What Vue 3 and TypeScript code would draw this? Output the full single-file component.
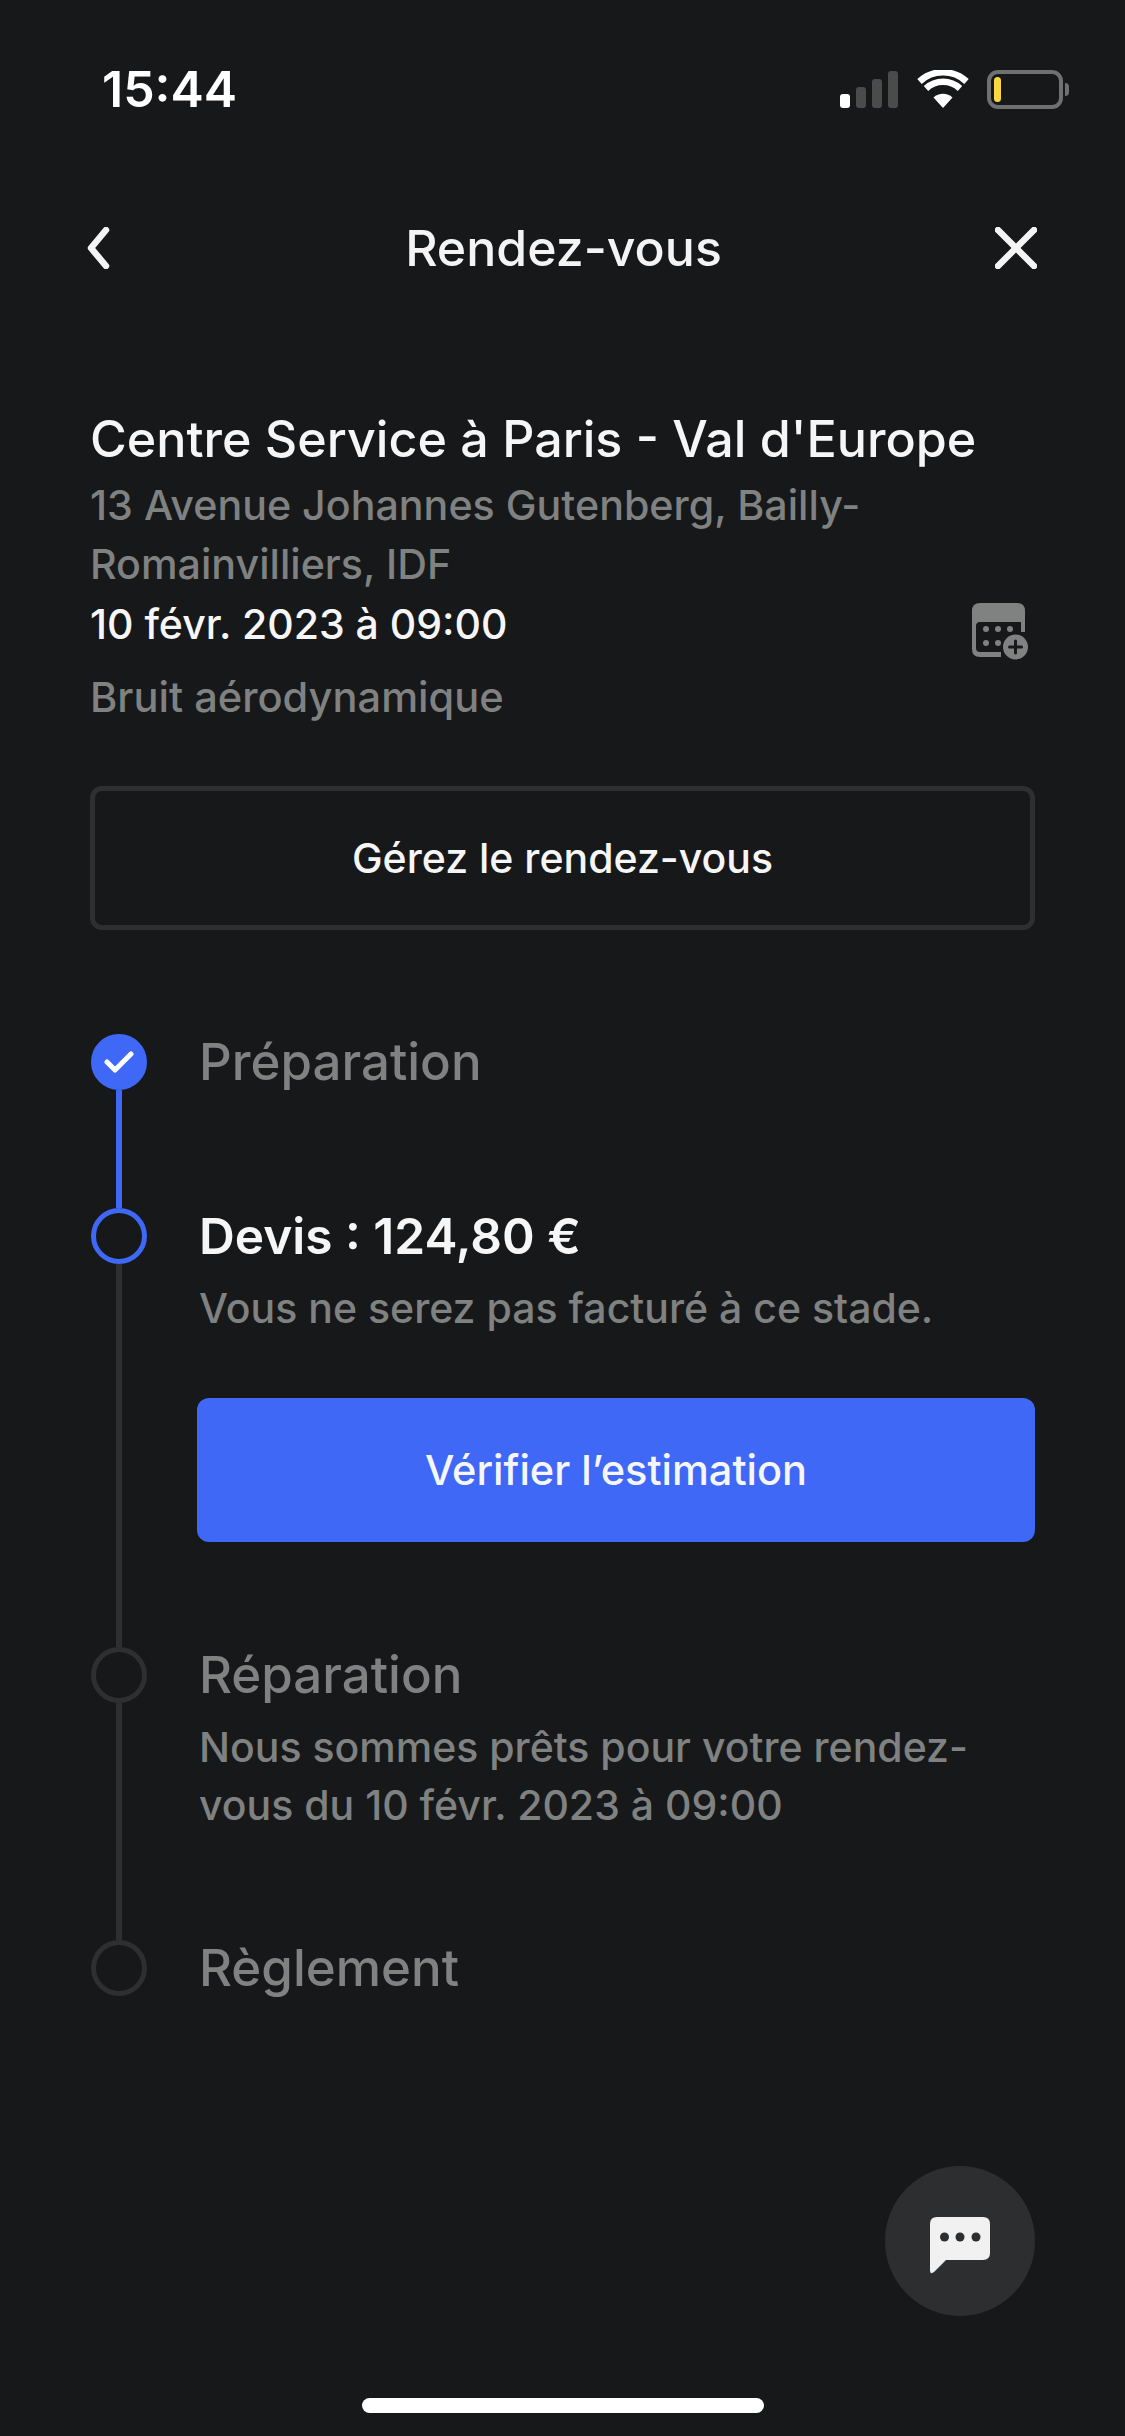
<script setup lang="ts">
interface Step {
  title: string
  state: 'done' | 'active' | 'todo'
  text?: string
  action?: string
}
const steps: Step[] = [
  { title: 'Préparation', state: 'done' },
  { title: 'Devis : 124,80 €', state: 'active', text: 'Vous ne serez pas facturé à ce stade.', action: 'Vérifier l’estimation' },
  { title: 'Réparation', state: 'todo', text: 'Nous sommes prêts pour votre rendez-vous du 10 févr. 2023 à 09:00' },
  { title: 'Règlement', state: 'todo' }
]
</script>

<template>
  <div class="screen">
    <div class="status">
      <span class="time">15:44</span>
      <div class="status-icons">
        <div class="signal">
          <i class="b1"></i><i class="b2"></i><i class="b3"></i><i class="b4"></i>
        </div>
        <svg class="wifi" width="52" height="38" viewBox="0 0 52 38">
          <path d="M26 38 L16.5 27.5 A14 14 0 0 1 35.5 27.5 Z" fill="#fff" />
          <path d="M9 18.5 A25 25 0 0 1 43 18.5" fill="none" stroke="#fff" stroke-width="6.5" />
          <path d="M2.5 11.5 A34.5 34.5 0 0 1 49.5 11.5" fill="none" stroke="#fff" stroke-width="6.5" />
        </svg>
        <div class="battery"><span class="level"></span></div>
        <span class="nub"></span>
      </div>
    </div>

    <header class="nav">
      <svg width="24" height="42" viewBox="0 0 24 42">
        <path d="M20 3 L5 21 L20 39" fill="none" stroke="#f4f4f4" stroke-width="6.5" stroke-linecap="round" stroke-linejoin="round" />
      </svg>
      <h1 class="nav-title">Rendez-vous</h1>
      <svg width="42" height="42" viewBox="0 0 42 42">
        <path d="M3 3 L39 39 M39 3 L3 39" fill="none" stroke="#f4f4f4" stroke-width="6.5" stroke-linecap="round" />
      </svg>
    </header>

    <main class="content">
      <section class="place">
        <h2 class="place-name">Centre Service à Paris - Val d'Europe</h2>
        <p class="muted">13 Avenue Johannes Gutenberg, Bailly-<br />Romainvilliers, IDF</p>
        <div class="date-row">
          <p class="date">10 févr. 2023 à 09:00</p>
          <svg class="cal" width="58" height="58" viewBox="0 0 58 58">
            <path d="M9 1 H46 Q54 1 54 9 V30 H50 V20 H9 Q5 20 5 24 V46 Q5 50 9 50 H30 V55 H9 Q1 55 1 47 V9 Q1 1 9 1 Z" fill="#7f8281" />
            <circle cx="15" cy="27" r="3" fill="#7f8281" />
            <circle cx="27" cy="27" r="3" fill="#7f8281" />
            <circle cx="39" cy="27" r="3" fill="#7f8281" />
            <circle cx="15" cy="41" r="3" fill="#7f8281" />
            <circle cx="27" cy="41" r="3" fill="#7f8281" />
            <circle cx="44.5" cy="45" r="12.5" fill="#7f8281" />
            <path d="M44.5 39 V51 M38.5 45 H50.5" stroke="#17181a" stroke-width="3" stroke-linecap="round" />
          </svg>
        </div>
        <p class="muted issue">Bruit aérodynamique</p>
      </section>

      <button class="outline-btn">Gérez le rendez-vous</button>

      <ol class="timeline">
        <li v-for="(step, i) in steps" :key="step.title" class="step" :class="`step-${i + 1} ${step.state}`">
          <div class="rail">
            <span class="dot">
              <svg v-if="step.state === 'done'" width="30" height="24" viewBox="0 0 30 24">
                <path d="M3 12 L11 20 L27 4" fill="none" stroke="#fff" stroke-width="5" stroke-linecap="round" stroke-linejoin="round" />
              </svg>
            </span>
            <span v-if="i < steps.length - 1" class="line"></span>
          </div>
          <div class="body">
            <h3 class="step-title">{{ step.title }}</h3>
            <p v-if="step.text" class="step-text">{{ step.text }}</p>
            <button v-if="step.action" class="primary-btn">{{ step.action }}</button>
          </div>
        </li>
      </ol>
    </main>

    <button class="fab" aria-label="Chat">
      <svg width="60" height="57" viewBox="0 0 60 57">
        <path d="M7 0 H53 Q60 0 60 7 V36 Q60 43 53 43 H16 L4 55 Q0 58 0 53 V7 Q0 0 7 0 Z" fill="#f1f1f1" />
        <circle cx="14.5" cy="20" r="4.5" fill="#2d2e2f" />
        <circle cx="30" cy="20" r="4.5" fill="#2d2e2f" />
        <circle cx="46" cy="20" r="4.5" fill="#2d2e2f" />
      </svg>
    </button>
    <div class="home"></div>
  </div>
</template>

<style>
html, body { margin: 0; background: #17181a; }
</style>

<style scoped>
.screen {
  position: relative;
  width: 1125px;
  height: 2436px;
  overflow: hidden;
  background: #17181a;
  color: #f4f4f4;
  font-family: Inter, "Liberation Sans", sans-serif;
}
p, h1, h2, h3, ol { margin: 0; padding: 0; }
li { list-style: none; }

.status {
  height: 200px;
  box-sizing: border-box;
  padding: 62px 56px 0 102px;
  display: flex;
  justify-content: space-between;
  align-items: flex-start;
}
.time { font-size: 50px; line-height: 54px; font-weight: 600; color: #fff; }
.status-icons { display: flex; align-items: center; height: 40px; margin-top: 7px; }
.signal { display: flex; align-items: flex-end; gap: 6px; height: 37px; margin-right: 19px; }
.signal i { width: 10px; border-radius: 3px; background: #4a4b4b; display: block; }
.signal .b1 { height: 14px; background: #fff; }
.signal .b2 { height: 21px; }
.signal .b3 { height: 29px; }
.signal .b4 { height: 37px; }
.wifi { margin-right: 18px; }
.battery {
  width: 76px;
  height: 39px;
  box-sizing: border-box;
  border: 4px solid #6f7070;
  border-radius: 11px;
  padding: 3px;
}
.level { display: block; width: 7px; height: 100%; background: #f8d73f; border-radius: 4px; }
.nub { width: 4px; height: 13px; margin-left: 2px; background: #6f7070; border-radius: 0 4px 4px 0; }

.nav {
  height: 96px;
  box-sizing: border-box;
  padding: 0 88px 0 86px;
  display: flex;
  justify-content: space-between;
  align-items: center;
}
.nav-title { font-size: 50px; font-weight: 500; line-height: 60px; color: #f4f4f4; margin-left: 22px; }

.content { padding: 0 90px; margin-top: 113px; }
.place-name { font-size: 50.2px; line-height: 60px; font-weight: 500; color: #f6f6f6; }
.muted { font-size: 41.2px; line-height: 59px; color: #7f8281; font-weight: 500; margin-top: 7px; }
.date-row { display: flex; justify-content: space-between; align-items: flex-start; margin-top: 1px; }
.date { font-size: 41px; line-height: 58px; font-weight: 500; color: #f6f6f6; }
.cal { margin: 7px 6px 0 0; }
.issue { margin-top: 8px; font-size: 41.6px; }

.outline-btn {
  display: block;
  width: 945px;
  height: 144px;
  margin-top: 59px;
  box-sizing: border-box;
  background: transparent;
  border: 5px solid #2e2f30;
  border-radius: 12px;
  color: #f6f6f6;
  font: 500 41px Inter, "Liberation Sans", sans-serif;
}

.timeline { margin-top: 104px; }
.step { display: flex; gap: 51px; }
.step-1 { height: 174px; }
.step-2 { height: 439px; }
.step-3 { height: 293px; }
.rail { width: 58px; display: flex; flex-direction: column; align-items: center; flex: none; }
.dot {
  width: 56px;
  height: 56px;
  box-sizing: border-box;
  border-radius: 50%;
  border: 5px solid #2e2f30;
  display: flex;
  align-items: center;
  justify-content: center;
  flex: none;
}
.line { width: 6px; flex: 1; background: #2e2f30; }
.done .dot { background: #3f68f6; border-color: #3f68f6; }
.done .line { background: #3f68f6; }
.active .dot { border-color: #3f68f6; }
.body { flex: 1; min-width: 0; }
.step-title { font-size: 51px; line-height: 56px; font-weight: 500; color: #7f8281; }
.active .step-title { color: #f6f6f6; font-size: 49.6px; font-weight: 600; }
.step-text { font-size: 41px; line-height: 58px; font-weight: 500; color: #7f8281; margin-top: 15px; }
.primary-btn {
  display: block;
  width: calc(100% + 2px);
  height: 144px;
  margin: 61px 0 0 -2px;
  background: #3f68f6;
  border: 0;
  border-radius: 12px;
  color: #f6f6f6;
  font: 500 41.5px Inter, "Liberation Sans", sans-serif;
}

.fab {
  position: absolute;
  left: 885px;
  top: 2166px;
  width: 150px;
  height: 150px;
  padding: 8px 0 0;
  border: 0;
  border-radius: 50%;
  background: #2d2e2f;
  display: flex;
  align-items: center;
  justify-content: center;
}
.home {
  position: absolute;
  left: 362px;
  top: 2398px;
  width: 402px;
  height: 15px;
  border-radius: 8px;
  background: #fff;
}
</style>
